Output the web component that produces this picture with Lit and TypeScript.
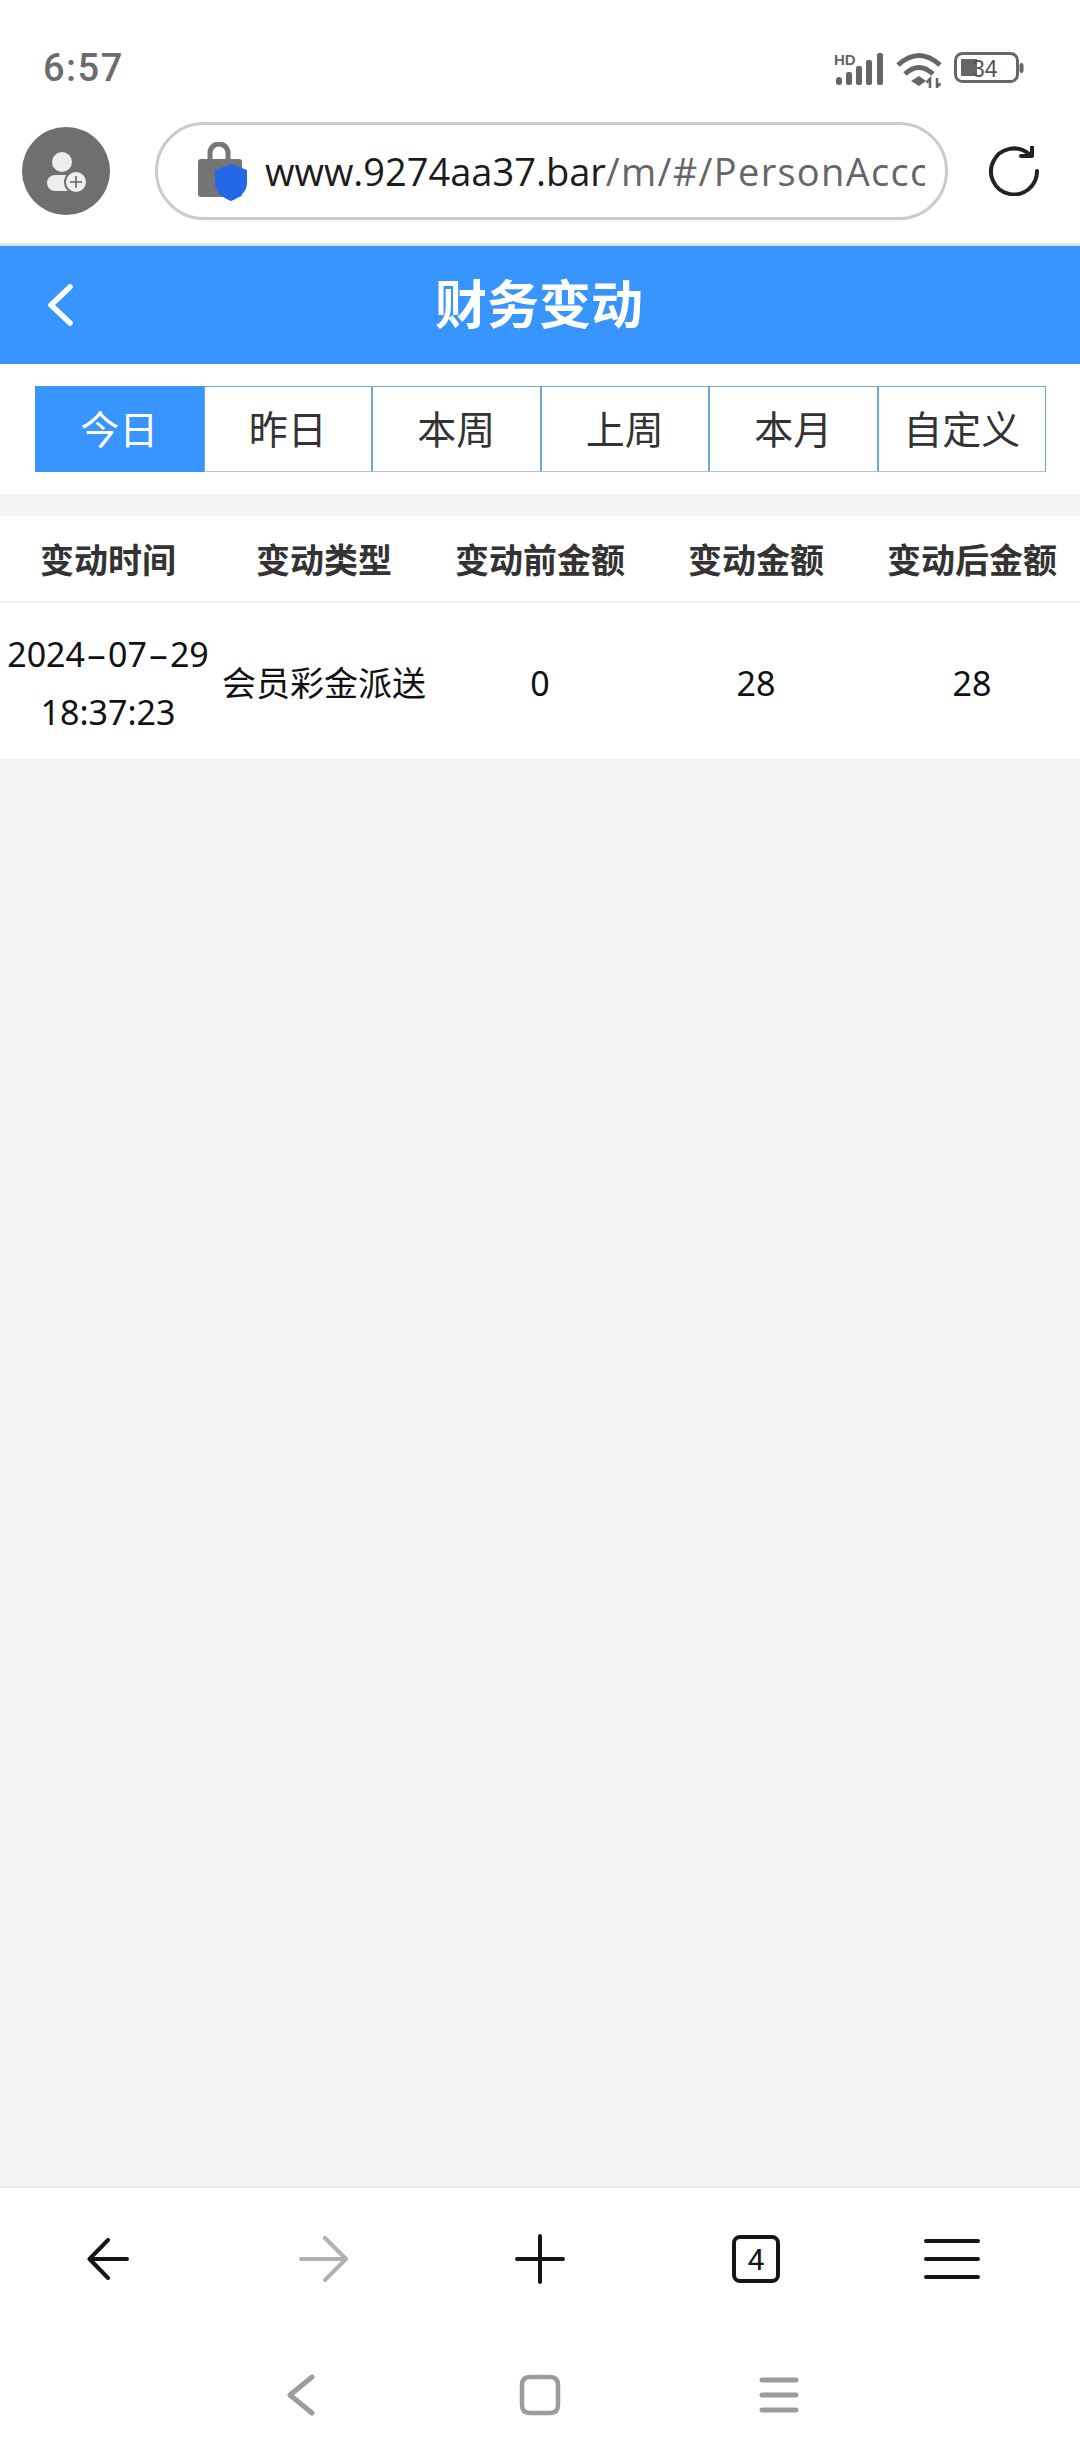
import { LitElement, html, css, svg } from "lit";
import { customElement } from "lit/decorators.js";

const TABS = ["今日", "昨日", "本周", "上周", "本月", "自定义"];
const COLUMNS = ["变动时间", "变动类型", "变动前金额", "变动金额", "变动后金额"];

@customElement("app-root")
export class AppRoot extends LitElement {
  static styles = css`
    :host {
      display: flex;
      flex-direction: column;
      width: 1080px;
      height: 2460px;
      overflow: hidden;
      background: #f4f5f7;
      font-family: "Noto Sans", "Noto Sans CJK SC", sans-serif;
      color: #111;
    }
    svg {
      display: block;
      flex: none;
    }

    /* system status bar */
    .status {
      display: flex;
      justify-content: space-between;
      align-items: flex-start;
      height: 120px;
      box-sizing: border-box;
      padding: 52px 56px 0 43px;
      background: #fff;
    }
    .time {
      font-family: Roboto, sans-serif;
      font-size: 38px;
      font-weight: 500;
      line-height: 32px;
      letter-spacing: 1.5px;
      color: #6c6c6c;
    }
    .status-icons {
      display: flex;
      align-items: flex-start;
      gap: 12px;
    }
    .status-text {
      font-family: "Liberation Sans", sans-serif;
    }

    /* browser toolbar */
    .toolbar {
      display: flex;
      align-items: center;
      height: 126px;
      box-sizing: border-box;
      padding: 0 0 21px 22px;
      background: #fff;
      border-bottom: 3px solid #dfe6ee;
    }
    .pill {
      display: flex;
      align-items: center;
      gap: 18px;
      width: 793px;
      height: 98px;
      box-sizing: border-box;
      margin-left: 45px;
      padding: 0 20px 0 40px;
      border: 3px solid #cbcbcb;
      border-radius: 49px;
    }
    .url {
      flex: 1;
      overflow: hidden;
      white-space: nowrap;
      font-family: "Open Sans", sans-serif;
      font-size: 38px;
      line-height: 50px;
      color: #666;
    }
    .url b {
      font-weight: 400;
      color: #1c1c1c;
    }
    .url i {
      font-style: normal;
      letter-spacing: 1.3px;
    }
    .refresh {
      margin-left: 41px;
    }

    /* page header */
    .header {
      display: grid;
      grid-template-columns: 1fr auto 1fr;
      align-items: center;
      height: 118px;
      padding: 0 47px 0 45px;
      background: #3894ff;
    }
    .title {
      padding-bottom: 8px;
      font-size: 52px;
      font-weight: 700;
      color: #fff;
      text-align: center;
    }

    /* date range tabs */
    .tabs-wrap {
      padding: 22px 34px 22px 35px;
      background: #fff;
    }
    .tabs {
      display: grid;
      grid-template-columns: repeat(6, 1fr);
      height: 86px;
    }
    .tab {
      display: flex;
      align-items: center;
      justify-content: center;
      box-sizing: border-box;
      padding-bottom: 5px;
      border: 1.5px solid #6ea6d8;
      border-bottom-color: #a6c8e4;
      font-size: 39px;
      color: #333;
      background: #fff;
    }
    .tab + .tab {
      border-left-width: 1px;
    }
    .tab.active {
      background: #3894ff;
      border-color: #3894ff;
      color: #fff;
    }

    /* table */
    .table {
      margin-top: 22px;
      background: #fff;
    }
    .row {
      display: grid;
      grid-template-columns: repeat(5, 216px);
      align-items: center;
      text-align: center;
    }
    .row.head {
      height: 85px;
      border-bottom: 2px solid #f0f1f3;
      font-size: 34px;
      font-weight: 700;
      color: #333;
    }
    .row.body {
      height: 158px;
      box-sizing: border-box;
      padding-top: 3px;
      border-bottom: 2px solid #f0f1f3;
      font-size: 34px;
      line-height: 58px;
      white-space: nowrap;
    }
    .dash {
      display: inline-block;
      width: 23px;
      transform: scaleX(1.9);
    }

    .spacer {
      flex: 1;
    }

    /* browser bottom bar */
    .bottom {
      display: grid;
      grid-template-columns: repeat(5, 216px);
      justify-items: center;
      align-items: center;
      height: 148px;
      box-sizing: border-box;
      padding-bottom: 4px;
      background: #fff;
      border-top: 2px solid #eceef0;
    }
    .bottom .last {
      margin-right: 40px;
    }
    .count {
      display: flex;
      align-items: center;
      justify-content: center;
      width: 48px;
      height: 48px;
      box-sizing: border-box;
      border: 4px solid #161616;
      border-radius: 8px;
      font-family: Roboto, sans-serif;
      font-size: 30px;
      color: #161616;
    }

    /* system nav bar */
    .nav {
      display: grid;
      grid-template-columns: repeat(3, 239px);
      justify-content: center;
      justify-items: center;
      align-items: center;
      height: 126px;
      padding-bottom: 4px;
      box-sizing: border-box;
      background: #fff;
    }
  `;

  private signalIcon() {
    return html`<svg width="50" height="34" viewBox="0 0 50 34">
      <text class="status-text" x="0" y="13" font-size="15" font-weight="700" fill="#666">HD</text>
      <g fill="#666">
        <rect x="2" y="25" width="6" height="8" rx="3"></rect>
        <rect x="12" y="20" width="6" height="13" rx="2"></rect>
        <rect x="22" y="14" width="6" height="19" rx="2"></rect>
        <rect x="32" y="8" width="6" height="25" rx="2"></rect>
        <rect x="43" y="1" width="6" height="32" rx="2"></rect>
      </g>
    </svg>`;
  }

  private wifiIcon() {
    return html`<svg width="46" height="36" viewBox="0 0 46 36">
      <g fill="none" stroke="#666" stroke-width="5">
        <path d="M2 13Q23 -6 44 13"></path>
        <path d="M9 22Q23 9 37 22"></path>
      </g>
      <path d="M15 29L23 24L30 29L23 34Z" fill="#666"></path>
      <path d="M34 36V27L30.500 30.500M41 26V35L44.500 31.500" fill="none" stroke="#666" stroke-width="2.600"></path>
    </svg>`;
  }

  private batteryIcon() {
    return html`<svg width="70" height="31" viewBox="0 0 70 31">
      <rect x="1.500" y="1.500" width="62" height="28" rx="7" fill="none" stroke="#666" stroke-width="3"></rect>
      <rect x="7" y="7" width="16" height="17" fill="#666"></rect>
      <text class="status-text" x="18" y="25" font-size="23" fill="#555">34</text>
      <rect x="65.500" y="11" width="4" height="10" rx="2" fill="#666"></rect>
    </svg>`;
  }

  private avatar() {
    return html`<svg width="88" height="88" viewBox="0 0 88 88">
      <circle cx="44" cy="44" r="44" fill="#6f6f6f"></circle>
      <circle cx="40" cy="35" r="10" fill="#eee"></circle>
      <rect x="25" y="48" width="36" height="16" rx="8" fill="#eee"></rect>
      <circle cx="54" cy="55" r="11" fill="#eee" stroke="#6f6f6f" stroke-width="2"></circle>
      <path d="M54 49V61M48 55H60" stroke="#666" stroke-width="1.600"></path>
    </svg>`;
  }

  private lock() {
    return html`<svg width="49" height="59" viewBox="0 0 49 59">
      <path d="M12 18V11a9 9 0 0 1 18 0V18" fill="none" stroke="#757575" stroke-width="5"></path>
      <rect x="0" y="17" width="44" height="38" rx="3" fill="#757575"></rect>
      <path d="M33 22L49 28V42Q48 53 33 59Q18 53 17 42V28Z" fill="#2468e8"></path>
    </svg>`;
  }

  private stroked(w: number, h: number, color: string, sw: number, d: string) {
    return html`<svg width=${w} height=${h} viewBox="0 0 ${w} ${h}">
      ${svg`<path d=${d} fill="none" stroke=${color} stroke-width=${sw} stroke-linecap="round" stroke-linejoin="round"></path>`}
    </svg>`;
  }

  render() {
    return html`
      <div class="status">
        <span class="time">6:57</span>
        <div class="status-icons">
          ${this.signalIcon()} ${this.wifiIcon()} ${this.batteryIcon()}
        </div>
      </div>

      <div class="toolbar">
        ${this.avatar()}
        <div class="pill">
          ${this.lock()}
          <span class="url"><b>www.9274aa37.bar</b><i>/m/#/PersonAcco</i></span>
        </div>
        <div class="refresh">
          ${this.stroked(50, 50, "#222", 4, "M40 8A23 23 0 1 0 48 25M32 10H43V1")}
        </div>
      </div>

      <div class="header">
        ${this.stroked(30, 42, "#fff", 5.5, "M25 3L6 21L25 39")}
        <div class="title">财务变动</div>
        <span></span>
      </div>

      <div class="tabs-wrap">
        <div class="tabs">
          ${TABS.map(
            (t, i) => html`<div class="tab ${i === 0 ? "active" : ""}">${t}</div>`
          )}
        </div>
      </div>

      <div class="table">
        <div class="row head">${COLUMNS.map((c) => html`<div>${c}</div>`)}</div>
        <div class="row body">
          <div>2024<span class="dash">-</span>07<span class="dash">-</span>29<br />18:37:23</div>
          <div>会员彩金派送</div>
          <div>0</div>
          <div>28</div>
          <div>28</div>
        </div>
      </div>

      <div class="spacer"></div>

      <div class="bottom">
        ${this.stroked(42, 42, "#161616", 4, "M40 21H3M21 2L2.500 21L21 40")}
        ${this.stroked(50, 46, "#b0b0b0", 4, "M2 23H47M26 2L47 23L26 44")}
        ${this.stroked(50, 50, "#161616", 4, "M25 2V48M2 25H48")}
        <div class="count">4</div>
        <div class="last">
          ${this.stroked(56, 40, "#161616", 4, "M2 2H54M2 20H54M2 38H54")}
        </div>
      </div>

      <div class="nav">
        ${this.stroked(28, 42, "#9c9c9c", 5, "M25 3L3 21L25 39")}
        ${this.stroked(42, 42, "#9c9c9c", 4.5, "M11 3H31Q39 3 39 11V31Q39 39 31 39H11Q3 39 3 31V11Q3 3 11 3Z")}
        ${this.stroked(40, 36, "#9c9c9c", 5, "M3 3H37M3 18H37M3 33H37")}
      </div>
    `;
  }
}
